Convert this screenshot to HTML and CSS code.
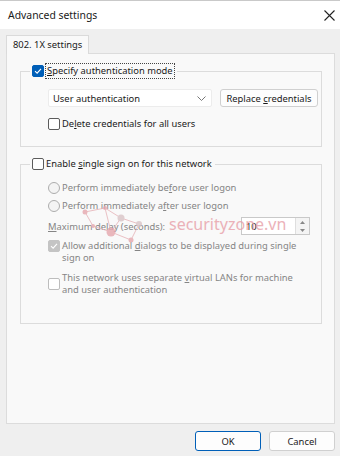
FILE: index.html
```html
<!DOCTYPE html>
<html lang="en">

<head>
  <meta charset="UTF-8" />
  <title>Advanced settings</title>
  <link rel="stylesheet" href="styles.css">
</head>

<body>
  <div class="dialog">
    <div class="titlebar">
      <span class="title">Advanced settings</span>
      <svg class="close" width="11" height="11" viewBox="0 0 11 11">
        <path d="M0.5 0.5 L10.5 10.5 M10.5 0.5 L0.5 10.5" stroke="#222" stroke-width="1.1" fill="none" />
      </svg>
    </div>

    <div class="content">
      <div class="tabs">
        <div class="tab">802. 1X settings</div>
      </div>

      <div class="panel">
        <fieldset class="group auth">
          <legend>
            <span class="check">
              <span class="box checked">
                <svg width="8" height="8" viewBox="0 0 8 8"><path d="M1 4.2 L3.1 6.2 L7 1.8" stroke="#fff" stroke-width="1.1" fill="none" /></svg>
              </span>
              <span class="focus"><u>S</u>pecify authentication mode</span>
            </span>
          </legend>

          <div class="row">
            <div class="select">
              <span>User authentication</span>
              <svg width="9" height="5" viewBox="0 0 9 5"><path d="M0.5 0.5 L4.5 4.5 L8.5 0.5" stroke="#777" stroke-width="1" fill="none" /></svg>
            </div>
            <button class="btn small">Replace <u>c</u>redentials</button>
          </div>

          <div class="check sub delete">
            <span class="box"></span>
            <span>De<u>l</u>ete credentials for all users</span>
          </div>
        </fieldset>

        <fieldset class="group sso">
          <legend>
            <span class="check">
              <span class="box"></span>
              <span>Enable <u>s</u>ingle sign on for this network</span>
            </span>
          </legend>

          <div class="check sub disabled first">
            <span class="radio"></span>
            <span>Perform immediately be<u>f</u>ore user logon</span>
          </div>
          <div class="check sub disabled">
            <span class="radio"></span>
            <span>Perform immediately a<u>f</u>ter user logon</span>
          </div>

          <div class="delay disabled">
            <span><u>M</u>aximum delay (seconds):</span>
            <div class="spin">
              <span>10</span>
              <div class="arrows">
                <svg width="5" height="3" viewBox="0 0 5 3"><path d="M0 3 L2.5 0 L5 3 Z" fill="#888" /></svg>
                <svg width="5" height="3" viewBox="0 0 5 3"><path d="M0 0 L2.5 3 L5 0 Z" fill="#888" /></svg>
              </div>
            </div>
          </div>

          <div class="check sub disabled multi">
            <span class="box checked grey">
              <svg width="8" height="8" viewBox="0 0 8 8"><path d="M1 4.2 L3.1 6.2 L7 1.8" stroke="#fff" stroke-width="1.1" fill="none" /></svg>
            </span>
            <span class="label">Allow additional <u>d</u>ialogs to be displayed during single sign on</span>
          </div>

          <div class="check sub disabled multi vlan">
            <span class="box grey-line"></span>
            <span class="label">This network uses separate <u>v</u>irtual LANs for machine and user authentication</span>
          </div>
        </fieldset>

        <!-- watermark from the source screenshot -->
        <div class="watermark">
          <svg width="80" height="44" viewBox="0 0 80 44">
            <g stroke="#e7b3b8" stroke-width="1" fill="none">
              <path d="M4 8 L24 4 L40 14 L30 28 L12 22 Z" />
              <path d="M40 14 L58 20 L50 36 L30 28" />
              <path d="M24 4 L30 28" />
            </g>
            <g fill="#e6a7ae">
              <circle cx="4" cy="8" r="2.5" />
              <circle cx="24" cy="4" r="2" />
              <circle cx="40" cy="14" r="3.5" fill="#d9c4c6" />
              <circle cx="30" cy="28" r="4.5" />
              <circle cx="12" cy="22" r="2" />
              <circle cx="58" cy="20" r="3" fill="#d9c4c6" />
              <circle cx="50" cy="36" r="2.5" />
            </g>
          </svg>
          <span>securityzone.vn</span>
        </div>
      </div>

      <div class="footer">
        <button class="btn default">OK</button>
        <button class="btn">Cancel</button>
      </div>
    </div>
  </div>
</body>

</html>
```

FILE: styles.css
```css
* {
  box-sizing: border-box;
}

body {
  margin: 0;
  font-family: "Noto Sans", "Open Sans", sans-serif;
  font-size: 9.4px;
  color: #1a1a1a;
  background-color: #efefef;
}

.dialog {
  width: 340px;
  height: 456px;
  display: flex;
  flex-direction: column;
  border-top: 1px solid #c9c9c9;
}

.titlebar {
  height: 28px;
  background-color: #ffffff;
  display: flex;
  align-items: center;
  justify-content: space-between;
  padding: 0 5px 0 8px;
}

.title {
  font-size: 10.4px;
}

.content {
  flex: 1;
  display: flex;
  flex-direction: column;
  padding: 6px 5px 0 6px;
}

.tabs {
  display: flex;
}

.tab {
  height: 19px;
  line-height: 18px;
  padding: 0 6px;
  background-color: #f9f9f9;
  border: 1px solid #dadada;
  border-bottom: none;
  position: relative;
  z-index: 1;
  margin-bottom: -1px;
}

.panel {
  height: 371px;
  background-color: #f9f9f9;
  border: 1px solid #dcdcdc;
  padding: 10px 12px 0 13px;
  position: relative;
}

.group {
  margin: 0;
  padding: 0 0 15px 14px;
  border: 1px solid #dcdcdc;
  min-width: 0;
}

.group legend {
  padding: 0 3px 0 2px;
  margin-left: -5px;
}

.sso {
  margin-top: 10px;
  padding-bottom: 27px;
}

.check {
  display: flex;
  align-items: center;
  gap: 2px;
  line-height: 14px;
}

.check.multi {
  align-items: flex-start;
  line-height: 12px;
  margin-top: 5px;
}

.check.multi .label {
  width: 236px;
}

.check.vlan {
  margin-top: 8px;
}

.check.multi .box {
  margin-top: 6px;
}

.sub {
  margin-top: 4px;
  margin-left: 13px;
}

.sub.first {
  margin-top: 10px;
}

.sub.delete {
  margin-top: 10px;
}

.box {
  width: 12px;
  height: 12px;
  border: 1px solid #5c5c5c;
  border-radius: 2px;
  background-color: #fff;
  display: flex;
  align-items: center;
  justify-content: center;
  flex-shrink: 0;
}

.box.checked {
  background-color: #005fb8;
  border-color: #005fb8;
}

.box.grey {
  background-color: #c4c4c4;
  border-color: #c4c4c4;
}

.check.multi .box.grey {
  margin-top: 0;
}

.box.grey-line {
  border-color: #bdbdbd;
}

.radio {
  width: 12px;
  height: 12px;
  border: 1px solid #adadad;
  border-radius: 50%;
  background-color: #f4f4f4;
  flex-shrink: 0;
}

.focus {
  outline: 1px dotted #444;
  padding: 0 1px;
}

.row {
  display: flex;
  align-items: center;
  gap: 8px;
  margin: 11px 0 0 13px;
}

.select {
  width: 164px;
  height: 18px;
  background-color: #fff;
  border: 1px solid #ececec;
  border-radius: 2px;
  display: flex;
  align-items: center;
  justify-content: space-between;
  padding: 0 5px 0 4px;
}

.btn {
  font-family: inherit;
  font-size: 9.4px;
  color: #1a1a1a;
  background-color: #fdfdfd;
  border: 1px solid #d0d0d0;
  border-radius: 3px;
  padding: 0;
  white-space: nowrap;
}

.small {
  width: 98px;
  height: 18px;
}

.disabled {
  color: #858585;
}

.delay {
  display: flex;
  align-items: center;
  justify-content: space-between;
  height: 18px;
  margin: 4px 11px 0 13px;
}

.spin {
  width: 69px;
  height: 18px;
  background-color: #fff;
  border: 1px solid #c9c9c9;
  display: flex;
  align-items: center;
  justify-content: space-between;
  padding-left: 4px;
  color: #222;
}

.arrows {
  width: 14px;
  height: 16px;
  border-left: 1px solid #dedede;
  display: flex;
  flex-direction: column;
  align-items: center;
  justify-content: space-around;
  background-color: #f4f4f4;
}

.watermark {
  position: absolute;
  left: 74px;
  top: 150px;
  display: flex;
  align-items: flex-start;
  pointer-events: none;
  opacity: 0.8;
}

.watermark span {
  font-size: 16px;
  line-height: 16px;
  color: #e8a0a8;
  margin-top: 12px;
  margin-left: 8px;
}

.footer {
  display: flex;
  justify-content: flex-end;
  gap: 8px;
  padding-top: 7px;
}

.footer .btn {
  width: 66px;
  height: 20px;
}

.footer .default {
  border-color: #005fb8;
}
```
